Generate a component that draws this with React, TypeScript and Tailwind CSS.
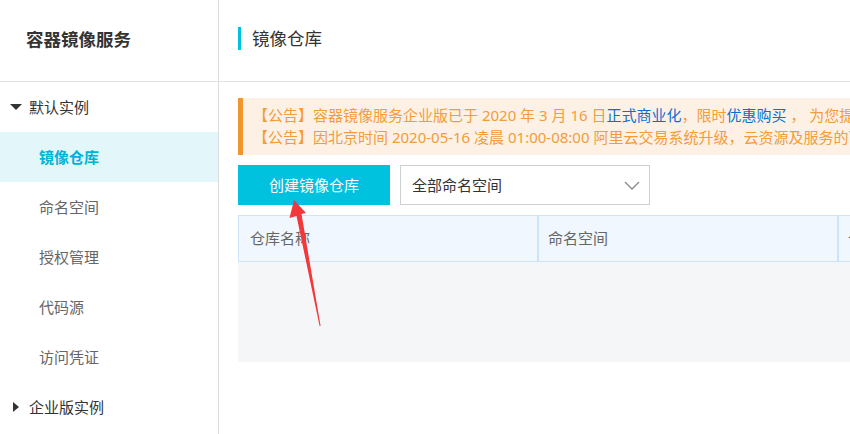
import type { ReactNode } from 'react'

const subItems = ['镜像仓库', '命名空间', '授权管理', '代码源', '访问凭证']

function MenuGroup({ open, children }: { open: boolean; children: ReactNode }) {
  return (
    <div className="flex h-[50px] items-center text-[15px] text-[#333]">
      {open ? (
        <span className="ml-[10px] mr-[7px] h-0 w-0 border-x-[6px] border-t-[6px] border-x-transparent border-t-[#333]" />
      ) : (
        <span className="ml-[13px] mr-[10px] h-0 w-0 border-y-[5.5px] border-l-[6px] border-y-transparent border-l-[#333]" />
      )}
      {children}
    </div>
  )
}

export default function App() {
  return (
    <div className="flex h-[434px] w-[850px] overflow-hidden bg-white font-['Noto_Sans','Noto_Sans_CJK_SC',sans-serif]">
      <aside className="w-[219px] shrink-0 border-r border-[#dcdcdc]">
        <div className="flex h-[82px] items-center border-b border-[#e3e3e3] pb-[3px] pl-[26px] text-[17.5px] font-bold text-[#333]">
          容器镜像服务
        </div>
        <nav>
          <MenuGroup open>默认实例</MenuGroup>
          {subItems.map((item, i) => (
            <div
              key={item}
              className={
                i === 0
                  ? 'flex h-[50px] items-center bg-[#e3f6fa] pl-[39px] text-[15px] font-semibold text-[#00b4d4]'
                  : 'flex h-[50px] items-center pl-[39px] text-[15px] text-[#666]'
              }
            >
              {item}
            </div>
          ))}
          <MenuGroup open={false}>企业版实例</MenuGroup>
        </nav>
      </aside>

      <main className="relative min-w-0 flex-1 overflow-hidden">
        <header className="flex h-[82px] items-center border-b border-[#e3e3e3] pb-[5px] pl-[19px]">
          <span className="mr-[11px] h-[23px] w-[3px] bg-[#00c1de]" />
          <h1 className="text-[17.5px] text-[#333]">镜像仓库</h1>
        </header>

        <div className="w-[1000px] pl-[19px] pt-[16px]">
          <div className="border-l-[5px] border-[#f0962f] bg-[#fdf1e6] py-[7px] pl-[10px] text-[15px] leading-[21.5px] whitespace-nowrap text-[#f39c3a]">
            <p>
              【公告】容器镜像服务企业版已于 2020 年 3 月 16 日
              <a className="text-[#0a6fcf]">正式商业化</a>，限时
              <a className="text-[#0a6fcf]">优惠购买</a> ， 为您提供更安全、更稳定的企业级镜像服务
            </p>
            <p>【公告】因北京时间 2020-05-16 凌晨 01:00-08:00 阿里云交易系统升级，云资源及服务的下单、续费等操作将受到影响</p>
          </div>

          <div className="mt-[10px] flex gap-[10px]">
            <button
              type="button"
              className="h-10 w-[152px] bg-[#00c1de] text-[15px] text-white"
            >
              创建镜像仓库
            </button>
            <div className="flex h-10 w-[250px] items-center justify-between border border-[#cfcfcf] pl-[11px] pr-[9px] text-[15px] text-[#333]">
              全部命名空间
              <svg width="16" height="9" viewBox="0 0 16 9" fill="none" stroke="#888" strokeWidth="1.3">
                <path d="M1 1l7 7 7-7" />
              </svg>
            </div>
          </div>

          <div className="mt-[10px]">
            <div className="flex h-[47px] border border-[#cfe3f8] bg-[#f0f7fe] text-[15px] text-[#666]">
              <div className="flex w-[300px] shrink-0 items-center border-r-2 border-[#cfe3f8] pl-[11px]">仓库名称</div>
              <div className="flex w-[300px] shrink-0 items-center border-r-2 border-[#cfe3f8] pl-[9px]">命名空间</div>
              <div className="flex w-[200px] shrink-0 items-center pl-[9px]">仓库类型</div>
            </div>
            <div className="h-[100px] bg-[#f5f6f8]" />
          </div>
        </div>

        <svg className="absolute left-0 top-0" width="632" height="434" viewBox="218 0 632 434">
          <polygon
            points="293,200 305,213 300.5,214 319.6,326 318.6,326 295.5,216 288.5,218"
            fill="#f2383a"
          />
        </svg>
      </main>
    </div>
  )
}
